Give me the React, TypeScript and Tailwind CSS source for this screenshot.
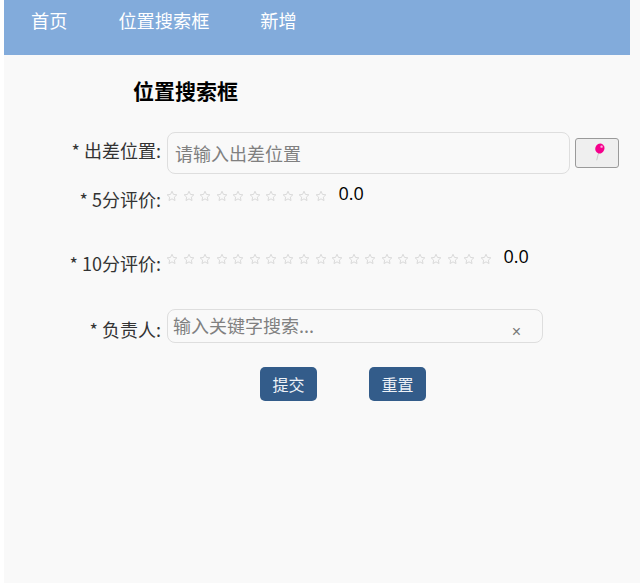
import React from "react";

function Star() {
  return (
    <svg viewBox="0 0 24 24" className="w-[12px] h-[12px] shrink-0" fill="none" stroke="#dadada" strokeWidth="2">
      <path d="M12 2.5l2.9 6.3 6.8.8-5 4.7 1.3 6.8-6-3.4-6 3.4 1.3-6.8-5-4.7 6.8-.8z" />
    </svg>
  );
}

function Rating({ n }: { n: number }) {
  return (
    <div className="ml-[5px] flex items-start">
      <div className="flex gap-[4.5px] mt-[8px]">
        {Array.from({ length: n }).map((_, i) => (
          <Star key={i} />
        ))}
      </div>
      <span className="ml-[12px] text-[18px] leading-[22px] text-black font-['Open_Sans',sans-serif]">0.0</span>
    </div>
  );
}

function Label({ text, className }: { text: string; className?: string }) {
  return (
    <div className={"w-[157px] shrink-0 text-right text-[18px] leading-[24px] text-[#333] whitespace-nowrap " + (className ?? "")}>
      {text}
    </div>
  );
}

export default function App() {
  return (
    <div className="w-[640px] h-[583px] bg-white flex overflow-hidden font-['Noto_Sans_CJK_SC',sans-serif]">
      <div className="ml-1 w-[636px] h-full bg-[#f9f9f9]">
        <div className="w-[626px] h-[55px] bg-[#82abdb] flex items-start pt-[7px] pl-[27px] gap-[51px] text-[18.2px] leading-[26px] text-white">
          <span>首页</span>
          <span>位置搜索框</span>
          <span>新增</span>
        </div>
        <div className="pl-[129px] pt-[21px] text-[21px] leading-[28px] font-bold text-black">位置搜索框</div>
        <div className="mt-[28px] flex items-start">
          <Label text="* 出差位置:" className="mt-[6px]" />
          <div className="ml-[6px] w-[403px] h-[42px] border border-[#dedede] rounded-lg flex items-center pl-[7px] text-[18px] text-[#808080]">请输入出差位置</div>
          <button className="ml-[5px] mt-[6px] w-[44px] h-[30px] border border-[#9a9a9a] rounded-[3px] bg-[#efefef] flex items-center justify-center">
            <svg viewBox="0 0 16 22" className="w-[15px] h-[20px] -mt-[1px] ml-[2px]">
              <path d="M8.5 9 L6 19" stroke="#c9c9c9" strokeWidth="1" />
              <ellipse cx="9.5" cy="6" rx="5" ry="5.6" fill="#f5008c" transform="rotate(20 9.5 6)" />
              <circle cx="11.4" cy="4" r="1.3" fill="#ffb0dc" />
            </svg>
          </button>
        </div>
        <div className="mt-[8px] flex items-start">
          <Label text="* 5分评价:" className="mt-[5px]" />
          <Rating n={10} />
        </div>
        <div className="mt-[34px] flex items-start">
          <Label text="* 10分评价:" className="mt-[6px]" />
          <Rating n={20} />
        </div>
        <div className="mt-[34px] flex items-start">
          <Label text="* 负责人:" className="mt-[8px]" />
          <div className="relative ml-[6px] w-[376px] h-[34px] border border-[#dedede] rounded-lg pl-[5px] text-[18px] leading-[30px] text-[#808080]">
            输入关键字搜索...
            <span className="absolute right-[21px] top-[10px] text-[16px] leading-[24px] text-[#777] font-['Liberation_Sans',sans-serif]">×</span>
          </div>
        </div>
        <div className="mt-[24px] pl-[256px] flex gap-[52px]">
          <button className="w-[57px] h-[34px] rounded-[5px] bg-[#335c8a] text-[#eef2f7] text-[16px]">提交</button>
          <button className="w-[57px] h-[34px] rounded-[5px] bg-[#335c8a] text-[#eef2f7] text-[16px]">重置</button>
        </div>
      </div>
    </div>
  );
}
